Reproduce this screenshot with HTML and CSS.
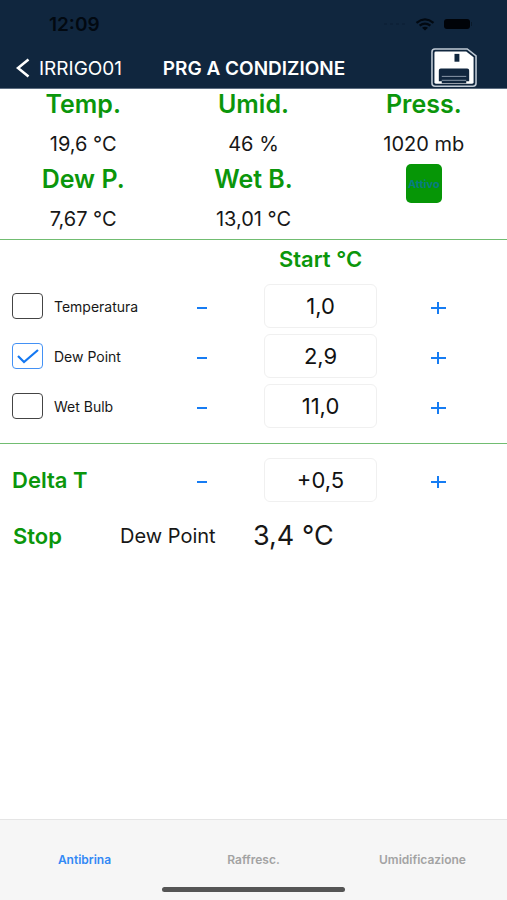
FILE: index.html
```html
<!DOCTYPE html>
<html lang="it">
<head>
<meta charset="utf-8">
<meta name="viewport" content="width=device-width, initial-scale=1">
<title>PRG A CONDIZIONE</title>
<link rel="stylesheet" href="styles.css">
</head>
<body>
<header class="header">
  <div class="status">
    <time class="clock">12:09</time>
    <div class="status-icons">
      <svg class="dots" viewBox="0 0 24 4" aria-hidden="true"><path d="M1 2h3M7 2h3M13 2h3M19 2h3" stroke="#0d2138" stroke-width="2"/></svg>
      <svg class="wifi" viewBox="0 0 20 13" aria-hidden="true"><path d="M1.500 4.800Q10-2 18.500 4.800M4.600 7.700Q10 3.500 15.400 7.700" fill="none" stroke="#020911" stroke-width="2.300"/><path d="M7 9.800Q10 7.500 13 9.800L10 12.600Z" fill="#020911"/></svg>
      <svg class="battery" viewBox="0 0 30 12" aria-hidden="true"><rect x="1" y="1" width="26" height="10" rx="3" fill="#000308"/><path d="M28.500 4v4" stroke="#0a1a2b" stroke-width="1"/></svg>
    </div>
  </div>
  <nav class="navbar">
    <a class="back" href="#"><svg class="chevron" viewBox="0 0 14 20" aria-hidden="true"><path d="M12.500 1.500L2 10L12.500 18.500" fill="none" stroke="#fff" stroke-width="2.600"/></svg>IRRIGO01</a>
    <h1 class="title">PRG A CONDIZIONE</h1>
    <button class="save" type="button" aria-label="Salva">
      <svg viewBox="0 0 48 40" aria-hidden="true">
        <path d="M4 1H37L46 8V36Q46 39 43 39H4Q1 39 1 36V4Q1 1 4 1Z" fill="#10263e" stroke="#c0cad5" stroke-width="1.600"/>
        <path d="M5 3.500H36L43.500 9.500V35Q43.500 36.500 42 36.500H5Q3.500 36.500 3.500 35V5Q3.500 3.500 5 3.500Z" fill="#fff"/>
        <rect x="24" y="6" width="5" height="8" fill="#10263e"/>
        <path d="M8 34V23Q8 21 10 21H37Q39 21 39 23V34H36V36H11V34Z" fill="#10263e"/>
        <path d="M11 29H36M11 33H36" stroke="#8c9bab" stroke-width="1"/>
      </svg>
    </button>
  </nav>
</header>
<main class="content">
  <section class="sensors">
    <div class="sensor"><h2>Temp.</h2><p>19,6 °C</p></div>
    <div class="sensor"><h2>Umid.</h2><p>46 %</p></div>
    <div class="sensor"><h2>Press.</h2><p>1020 mb</p></div>
    <div class="sensor"><h2>Dew P.</h2><p>7,67 °C</p></div>
    <div class="sensor"><h2>Wet B.</h2><p>13,01 °C</p></div>
    <div class="sensor"><button class="active" type="button">Attivo</button></div>
  </section>
  <section class="thresholds">
    <div class="row heading"><h2>Start °C</h2></div>
    <div class="row">
      <label class="option"><span class="check"><input type="checkbox"><svg viewBox="0 0 31 26" aria-hidden="true"><path d="M6 13L12 19L26 7"/></svg></span>Temperatura</label>
      <button class="step minus" type="button" aria-label="Diminuisci temperatura"></button>
      <input class="value" type="text" value="1,0" aria-label="Start temperatura">
      <button class="step plus" type="button" aria-label="Aumenta temperatura"></button>
    </div>
    <div class="row">
      <label class="option"><span class="check"><input type="checkbox" checked><svg viewBox="0 0 31 26" aria-hidden="true"><path d="M6 13L12 19L26 7"/></svg></span>Dew Point</label>
      <button class="step minus" type="button" aria-label="Diminuisci dew point"></button>
      <input class="value" type="text" value="2,9" aria-label="Start dew point">
      <button class="step plus" type="button" aria-label="Aumenta dew point"></button>
    </div>
    <div class="row">
      <label class="option"><span class="check"><input type="checkbox"><svg viewBox="0 0 31 26" aria-hidden="true"><path d="M6 13L12 19L26 7"/></svg></span>Wet Bulb</label>
      <button class="step minus" type="button" aria-label="Diminuisci wet bulb"></button>
      <input class="value" type="text" value="11,0" aria-label="Start wet bulb">
      <button class="step plus" type="button" aria-label="Aumenta wet bulb"></button>
    </div>
  </section>
  <section class="delta">
    <div class="row">
      <label class="green" for="delta">Delta T</label>
      <button class="step minus" type="button" aria-label="Diminuisci delta"></button>
      <input class="value" id="delta" type="text" value="+0,5">
      <button class="step plus" type="button" aria-label="Aumenta delta"></button>
    </div>
    <div class="stop">
      <h2 class="green">Stop</h2>
      <span class="stop-name">Dew Point</span>
      <span class="stop-value">3,4 °C</span>
    </div>
  </section>
</main>
<footer class="footer">
  <nav class="tabs">
    <a class="tab selected" href="#">Antibrina</a>
    <a class="tab" href="#">Raffresc.</a>
    <a class="tab" href="#">Umidificazione</a>
  </nav>
  <div class="home"></div>
</footer>
</body>
</html>
```
FILE: styles.css
```css
* { box-sizing: border-box; }

body {
  display: flex;
  flex-direction: column;
  min-height: 100vh;
  margin: 0;
  background: #fff;
  color: #171717;
  font-family: Inter, "Liberation Sans", sans-serif;
}

h1, h2, p { margin: 0; }
a { text-decoration: none; }

button {
  padding: 0;
  border: 0;
  background: none;
  font-family: inherit;
}

svg { display: block; }

.header {
  background: #10263e;
  border-bottom: 1px solid #5d6d80;
  color: #fff;
}

.status {
  display: flex;
  align-items: center;
  justify-content: space-between;
  height: 48px;
  padding: 0 34px 0 49px;
}

.clock {
  color: #020911;
  font-size: 19px;
  font-weight: 600;
}

.status-icons {
  display: flex;
  align-items: center;
  gap: 8px;
}

.dots { width: 24px; height: 4px; }
.wifi { width: 20px; height: 13px; }
.battery { width: 30px; height: 12px; }

.navbar {
  display: grid;
  grid-template-columns: 1fr auto 1fr;
  align-items: center;
  height: 40px;
  padding: 0 29px 0 16px;
}

.back {
  display: flex;
  align-items: center;
  gap: 9px;
  color: #fff;
  font-size: 19px;
}

.chevron { width: 14px; height: 20px; }

.title {
  padding-left: 14px;
  font-size: 19px;
  font-weight: 600;
  white-space: nowrap;
}

.save {
  justify-self: end;
  width: 47px;
  height: 40px;
}

.sensors {
  display: grid;
  grid-template-columns: repeat(3, 1fr);
  column-gap: 4px;
  border-bottom: 1px solid #71bd71;
  text-align: center;
}

.sensor { height: 75px; }

h2 {
  color: #0b960b;
  font-weight: 600;
}

.sensor h2 {
  font-size: 25px;
  line-height: 30px;
}

.sensor p {
  padding-top: 12px;
  font-size: 20px;
  line-height: 27px;
}

.active {
  width: 36px;
  height: 39px;
  border-radius: 5px;
  background: #069606;
  color: #087b82;
  font-size: 11px;
  font-weight: 700;
}

.row {
  display: grid;
  grid-template-columns: 128fr 124fr 113fr 122fr;
  align-items: center;
  padding: 0 8px 0 12px;
}

.thresholds {
  display: grid;
  row-gap: 6px;
  padding-bottom: 15px;
  border-bottom: 1px solid #71bd71;
}

.heading h2 {
  grid-column: 3;
  font-size: 22px;
  line-height: 38px;
  text-align: center;
  white-space: nowrap;
}

.option {
  display: flex;
  align-items: center;
  gap: 11px;
  font-size: 14px;
  white-space: nowrap;
}

.check {
  position: relative;
  flex: none;
  width: 31px;
  height: 26px;
}

.check input {
  display: block;
  appearance: none;
  width: 100%;
  height: 100%;
  margin: 0;
  border: 1px solid #444;
  border-radius: 4px;
}

.check svg {
  display: none;
  position: absolute;
  inset: 0;
  fill: none;
  stroke: #1478f2;
  stroke-width: 2.2;
  pointer-events: none;
}

.check input:checked { border-color: #4391f5; }
.check input:checked + svg { display: block; }

.step {
  justify-self: center;
  width: 44px;
  height: 40px;
  background: linear-gradient(#167cf3, #167cf3) center 21px / 10px 2px no-repeat;
}

.plus {
  background-image: linear-gradient(#167cf3, #167cf3), linear-gradient(#167cf3, #167cf3);
  background-position: center 21px, center 16px;
  background-size: 15px 2px, 2px 12px;
}

.value {
  width: 100%;
  height: 44px;
  padding: 0;
  border: 1px solid #f0f0f0;
  border-radius: 6px;
  background: #fff;
  color: #111;
  font: 400 22px Inter, "Liberation Sans", sans-serif;
  text-align: center;
}

.delta { padding-top: 14px; }

.green {
  color: #0b960b;
  font-size: 22px;
  font-weight: 600;
  white-space: nowrap;
}

.stop {
  display: grid;
  grid-template-columns: 107fr 133fr 254fr;
  align-items: center;
  padding: 16px 0 0 13px;
  line-height: 32px;
}

.stop-name { font-size: 20px; line-height: 36px; }
.stop-value { font-size: 27px; line-height: 36px; }

.footer {
  margin-top: auto;
  padding-bottom: 8px;
  border-top: 1px solid #e5e5e5;
  background: #f6f6f6;
}

.tabs {
  display: grid;
  grid-template-columns: repeat(3, 1fr);
  padding: 30px 0 17px;
}

.tab {
  color: #a3a3a3;
  font-size: 12px;
  font-weight: 600;
  line-height: 20px;
  text-align: center;
}

.selected { color: #3289f5; }

.home {
  width: 36%;
  height: 5px;
  margin: 0 auto;
  border-radius: 3px;
  background: #555;
}
```
